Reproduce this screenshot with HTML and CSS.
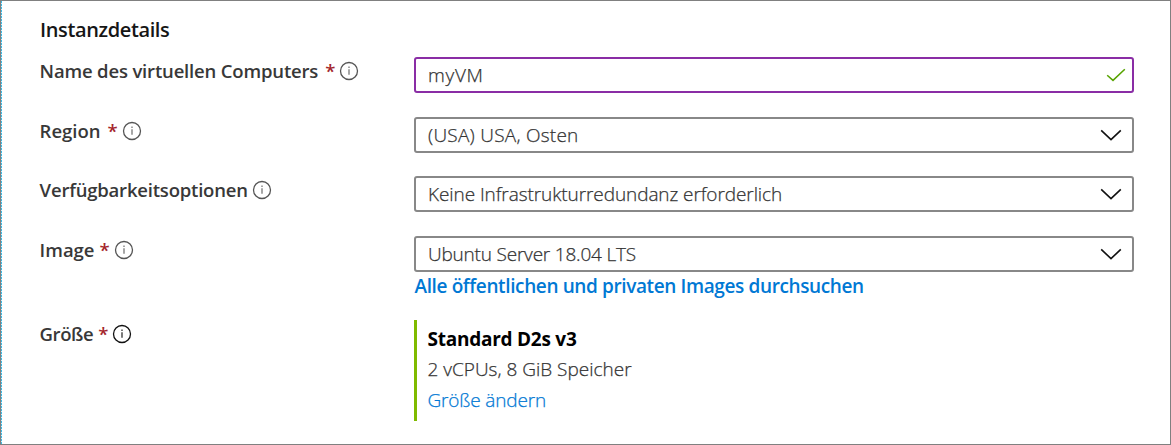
FILE: index.html
```html
<!DOCTYPE html>
<html lang="de">
<head>
<meta charset="utf-8">
<title>Instanzdetails</title>
<link rel="stylesheet" href="styles.css">
</head>
<body>
<svg class="defs" aria-hidden="true">
  <symbol id="info" viewBox="0 0 20 20"><circle cx="10" cy="10" r="8.5" fill="none" stroke="currentColor" stroke-width="1.3"/><path class="info-i" d="M10 8.2v5.6M10 5.6v1.5" fill="none" stroke-width="1.3"/></symbol>
  <symbol id="chevron" viewBox="0 0 22 12"><path d="M1.2 1.4 11 10.6 20.8 1.4" fill="none" stroke="currentColor" stroke-width="1.6"/></symbol>
  <symbol id="check" viewBox="0 0 20 14"><path d="M1.2 7.2 7 12.4 18.8 1.2" fill="none" stroke="currentColor" stroke-width="1.5"/></symbol>
</svg>
<main class="panel">
  <h2 class="title"><span class="t-title">Instanzdetails</span></h2>
  <div class="row">
    <div class="label"><span class="t-name">Name des virtuellen Computers</span><span class="req wide">*</span><svg class="info"><use href="#info"/></svg></div>
    <div class="field active"><span class="t-vm">myVM</span><svg class="check"><use href="#check"/></svg></div>
  </div>
  <div class="row second">
    <div class="label"><span class="t-region">Region</span><span class="req wide">*</span><svg class="info"><use href="#info"/></svg></div>
    <div class="field"><span class="t-east">(USA) USA, Osten</span><svg class="chevron"><use href="#chevron"/></svg></div>
  </div>
  <div class="row third">
    <div class="label"><span class="t-avail">Verfügbarkeitsoptionen</span><svg class="info"><use href="#info"/></svg></div>
    <div class="field"><span class="t-redundancy">Keine Infrastrukturredundanz erforderlich</span><svg class="chevron"><use href="#chevron"/></svg></div>
  </div>
  <div class="row fourth">
    <div class="label"><span class="t-image">Image</span><span class="req">*</span><svg class="info"><use href="#info"/></svg></div>
    <div class="field"><span class="t-ubuntu">Ubuntu Server 18.04 LTS</span><svg class="chevron"><use href="#chevron"/></svg></div>
  </div>
  <div class="browse"><a class="t-browse">Alle öffentlichen und privaten Images durchsuchen</a></div>
  <div class="row size-row">
    <div class="label"><span class="t-size">Größe</span><span class="req">*</span><svg class="info dark"><use href="#info"/></svg></div>
    <div class="size">
      <strong class="t-std">Standard D2s v3</strong>
      <span class="t-spec">2 vCPUs, 8 GiB Speicher</span>
      <a class="t-change">Größe ändern</a>
    </div>
  </div>
</main>
</body>
</html>
```
FILE: styles.css
```css
* { box-sizing: border-box; }
body { margin: 0; background: #fff; font-family: "Open Sans", "Noto Sans", sans-serif; font-size: 19px; color: #333; }
.defs { display: none; }
.panel { width: 1171px; height: 445px; border: 1px solid #808080; padding: 15px 36px 0 38px; background: repeating-linear-gradient(#3db9e3 0 2px, #d8eef6 2px 3px) left top / 1px 100% no-repeat #fff; }
.title { margin: 0 0 13px; padding-left: 1px; height: 28px; line-height: 28px; font-size: 20px; font-weight: 600; color: #161616; }
.row { display: grid; grid-template-columns: 375px 720px; height: 36px; }
.second, .fourth { margin-top: 24px; }
.third { margin-top: 23px; }
.label { display: flex; align-items: center; height: 27px; padding-left: 0.6px; line-height: 27px; font-size: 18.5px; font-weight: 600; color: #383838; white-space: nowrap; }
.req { color: #a4262c; width: 9px; margin: 0 5px; }
.req.wide { margin-left: 7px; }
.info { width: 20px; height: 20px; color: #555; stroke: #777; flex: none; }
.t-avail + .info { margin-left: 4px; }
.info.dark { color: #111; stroke: #333; }
.info-i { stroke: inherit; }
.field { display: flex; align-items: center; justify-content: space-between; border: 2px solid #888; border-radius: 3px; padding: 0 10px 0 12px; font-weight: 300; -webkit-text-stroke: 0.25px currentColor; white-space: nowrap; }
.active { border-color: #8a2da5; }
.chevron { width: 22px; height: 12px; color: #111; }
.check { width: 20px; height: 14px; color: #57a300; margin-right: -4px; }
.browse { margin-left: 375.5px; height: 28px; line-height: 28px; font-weight: 600; color: #0078d4; white-space: nowrap; }
.size-row { height: 101px; margin-top: 20px; }
.size { display: flex; flex-direction: column; border-left: 3px solid #7fba00; padding: 4px 0 0 10.5px; line-height: 30.4px; font-weight: 300; white-space: nowrap; align-items: flex-start; }
.size strong { font-weight: 700; color: #000; }
.size a { color: #0078d4; }
.t-spec, .t-change { -webkit-text-stroke: 0.25px currentColor; }

/* Per-string tracking */
.t-title { letter-spacing: -0.38px; }
.t-name { letter-spacing: -0.17px; }
.t-avail { letter-spacing: -0.2px; }
.t-size { letter-spacing: -0.4px; }
.t-vm { letter-spacing: 0.7px; }
.t-east { letter-spacing: 0.25px; }
.t-redundancy { letter-spacing: -0.08px; }
.t-ubuntu { letter-spacing: -0.2px; }
.t-browse { letter-spacing: -0.38px; }
.t-std { letter-spacing: -0.25px; }
.t-change { letter-spacing: -0.15px; }
```
